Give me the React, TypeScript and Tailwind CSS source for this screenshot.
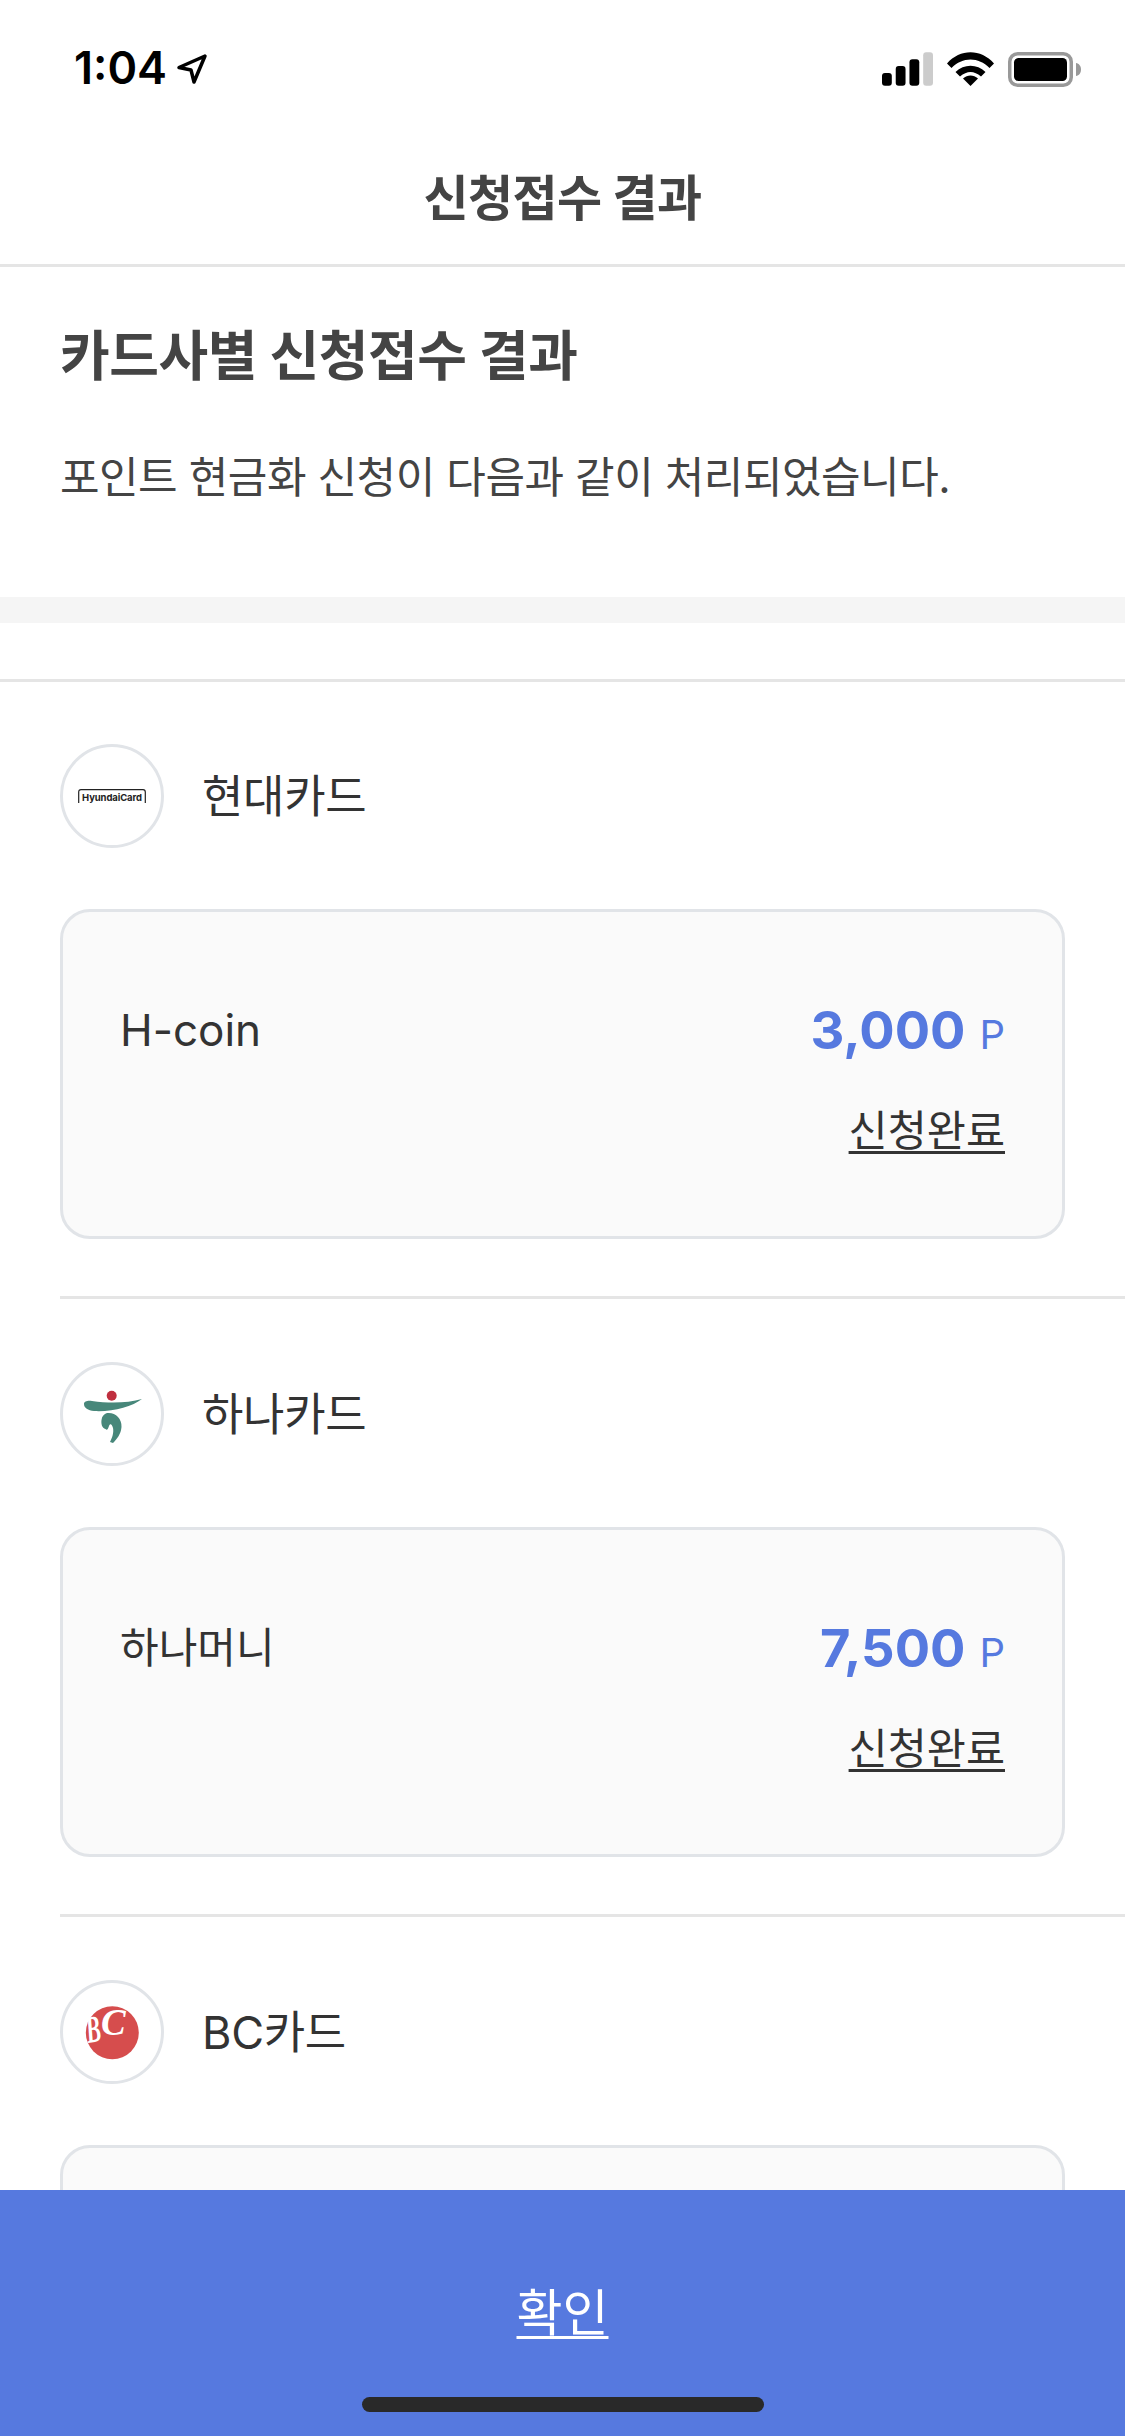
import React from 'react';

const FONT = "font-['Inter','Noto_Sans_CJK_KR',sans-serif]";

function HyundaiLogo() {
  return (
    <div className="relative w-[68px] h-[14px] flex items-center justify-center">
      <svg className="absolute inset-0" width="68" height="14" viewBox="0 0 68 14" fill="none">
        <path d="M0.7 14V3Q0.7 0.7 3 0.7H65Q67.3 0.7 67.3 3V14" stroke="#222" strokeWidth="1.2" />
      </svg>
      <span className="text-[9.5px] leading-none font-bold tracking-[-0.1px] text-[#222] mt-[3px]">HyundaiCard</span>
    </div>
  );
}

function HanaLogo() {
  return (
    <svg width="98" height="98" viewBox="3 3 98 98">
      <circle cx="51.7" cy="33.7" r="5" fill="#bf2f3f" />
      <path d="M24 42C24 39 28 38.5 32 39C50 41.5 68 41 82 37C72 45 52 50 34 49C28 48.5 24 46 24 42Z" fill="#47877a" />
      <path d="M47 51C55 50 62 56 61.5 65C61 72 57 77 53 81L50 80C52 76 54 71 53 66C52 62 50 61 49 64C48 67 47 69 45.5 67C42 66 41 62 41.5 58C42 54 44 52 47 51Z" fill="#47877a" />
    </svg>
  );
}

function BcLogo() {
  return (
    <svg width="98" height="98" viewBox="3 3 98 98">
      <circle cx="52.3" cy="52.7" r="26.5" fill="#d64d4d" />
      <text fontSize="38" fontFamily="'Liberation Serif', serif" fontStyle="italic" fontWeight="700" fill="#fff" transform="translate(28 63) rotate(-10) scale(0.58 1)">B</text>
      <text x="41" y="55" fontSize="37" fontFamily="'Liberation Serif', serif" fontStyle="italic" fontWeight="700" fill="#fff">C</text>
    </svg>
  );
}

function CardRow({
  name,
  logo,
  label,
  labelClass,
  amount,
}: {
  name: string;
  logo: React.ReactNode;
  label?: string;
  labelClass?: string;
  amount?: string;
}) {
  return (
    <section>
      <div className="flex items-center gap-[38px]">
        <div className="w-[104px] h-[104px] rounded-full border-[3px] border-[#e1e4e8] flex items-center justify-center shrink-0 bg-white">
          {logo}
        </div>
        <span className="text-[45px] leading-none text-[#333] tracking-[-0.3px]">{name}</span>
      </div>
      <div className="mt-[61px] mr-[60px] h-[330px] rounded-[30px] border-[3px] border-[#e1e4e8] bg-[#fafafa] px-[57px] pt-[91px]">
        {amount && (
          <>
            <div className="flex justify-between items-start">
              <span className={`leading-[54px] text-[#333] ${labelClass}`}>{label}</span>
              <span className="leading-[54px] text-[#5679df] whitespace-nowrap">
                <span className="text-[52.5px] font-bold">{amount}</span>
                <span className="text-[40px] ml-[14px]">P</span>
              </span>
            </div>
            <div className="mt-[34px] flex justify-end">
              <span className="text-[42.5px] leading-[54px] text-[#333] underline decoration-[3px] underline-offset-[5px]">신청완료</span>
            </div>
          </>
        )}
      </div>
    </section>
  );
}

export default function App() {
  return (
    <div className={`relative w-[1125px] h-[2436px] overflow-hidden bg-white ${FONT}`}>
      {/* status bar */}
      <div className="h-[132px] flex justify-between pt-[44px] pl-[74px] pr-[43px]">
        <div className="flex items-start gap-[9px] h-[48px]">
          <span className="text-[45px] leading-[48px] font-semibold text-black">1:04</span>
          <svg className="mt-[9px]" width="32" height="32" viewBox="0 0 32 32" fill="none">
            <path d="M29 3L3 14.5L15 17L18 29L29 3Z" stroke="#000" strokeWidth="3.5" strokeLinejoin="round" />
          </svg>
        </div>
        <div className="flex items-start gap-[14px] pt-[8px]">
          <svg width="51" height="34" viewBox="0 0 52 34">
            <rect x="0" y="21" width="10" height="13" rx="3" fill="#000" />
            <rect x="14" y="14" width="10" height="20" rx="3" fill="#000" />
            <rect x="28" y="7" width="10" height="27" rx="3" fill="#000" />
            <rect x="42" y="0" width="10" height="34" rx="3" fill="#ccc" />
          </svg>
          <svg width="47" height="34" viewBox="0 0 47 34" fill="#000">
            <path d="M0 11.5C13 -3.5 34 -3.5 47 11.5L42.5 16C31.5 4.5 15.5 4.5 4.5 16Z" />
            <path d="M8.5 20C17 11.5 30 11.5 38.5 20L34 24.5C27 18.5 20 18.5 13 24.5Z" />
            <path d="M16 26.5C20.5 22.5 26.5 22.5 31 26.5L23.5 34Z" />
          </svg>
          <svg width="74" height="35" viewBox="0 0 74 35" fill="none">
            <rect x="1.75" y="1.75" width="61.5" height="31.5" rx="8" stroke="#999" strokeWidth="3.5" />
            <rect x="6" y="6" width="53" height="23" rx="4.5" fill="#000" />
            <path d="M68 11C71 11.5 73 14 73 17.5C73 21 71 23.5 68 24Z" fill="#999" />
          </svg>
        </div>
      </div>

      {/* nav title */}
      <header className="h-[135px] border-b-[3px] border-[#e5e5e5] flex items-center justify-center">
        <h1 className="text-[49px] leading-none font-bold text-[#444] tracking-[-0.6px]">신청접수 결과</h1>
      </header>

      {/* intro */}
      <div className="h-[330px] px-[60px] pt-[58px]">
        <h2 className="text-[54px] leading-[64px] font-bold text-[#444] tracking-[-0.4px]">카드사별 신청접수 결과</h2>
        <p className="mt-[61px] text-[43px] leading-[54px] text-[#444] tracking-[-0.5px]">포인트 현금화 신청이 다음과 같이 처리되었습니다.</p>
      </div>

      <div className="h-[26px] bg-[#f5f5f5]" />

      {/* card companies */}
      <div className="mt-[56px] border-t-[3px] border-[#e5e5e5] pt-[62px] pl-[60px]">
        <CardRow name="현대카드" logo={<HyundaiLogo />} label="H-coin" labelClass="text-[44px]" amount="3,000" />
        <div className="mt-[57px] mb-[63px] border-t-[3px] border-[#e5e5e5]" />
        <CardRow name="하나카드" logo={<HanaLogo />} label="하나머니" labelClass="text-[42px]" amount="7,500" />
        <div className="mt-[57px] mb-[63px] border-t-[3px] border-[#e5e5e5]" />
        <CardRow name="BC카드" logo={<BcLogo />} />
      </div>

      {/* confirm button over the list */}
      <div className="absolute left-0 right-0 bottom-0 h-[246px] bg-[#5679df] flex justify-center pt-[95px]">
        <span className="text-[50px] leading-[56px] text-white underline decoration-[3px] underline-offset-[5px]">확인</span>
        <div className="absolute left-[362px] top-[207px] w-[402px] h-[15px] rounded-full bg-[#292929]" />
      </div>
    </div>
  );
}
